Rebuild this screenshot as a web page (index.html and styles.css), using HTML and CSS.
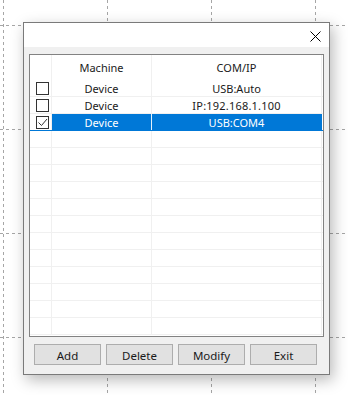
FILE: index.html
```html
<!DOCTYPE html>
<html lang="en">
<head>
    <meta charset="UTF-8">
    <meta name="viewport" content="width=device-width, initial-scale=1.0">
    <title>Device list</title>
    <link rel="stylesheet" href="styles.css">
</head>
<body>

<!-- dashed grid of the designer canvas -->
<svg class="canvas-grid" width="348" height="395" viewBox="0 0 348 395">
    <g stroke="#a6a6a6" stroke-width="1" stroke-dasharray="3 3" fill="none">
        <line x1="3.5" y1="0" x2="3.5" y2="395"/>
        <line x1="107.5" y1="0" x2="107.5" y2="395"/>
        <line x1="211.5" y1="0" x2="211.5" y2="395"/>
        <line x1="315.5" y1="0" x2="315.5" y2="395"/>
        <line x1="0" y1="25.5" x2="348" y2="25.5"/>
        <line x1="0" y1="129.5" x2="348" y2="129.5"/>
        <line x1="0" y1="233.5" x2="348" y2="233.5"/>
        <line x1="0" y1="337.5" x2="348" y2="337.5"/>
    </g>
</svg>

<div class="dialog">
    <div class="titlebar">
        <span class="close">
            <svg width="11" height="11" viewBox="0 0 11 11">
                <path d="M0.5 0.5 L10.5 10.5 M10.5 0.5 L0.5 10.5" stroke="#000" stroke-width="1" fill="none"/>
            </svg>
        </span>
    </div>

    <div class="dialog-body">
        <div class="list">
            <div class="row head">
                <div class="cell c-check"></div>
                <div class="cell c-name">Machine</div>
                <div class="cell c-port">COM/IP</div>
            </div>

            <div class="row">
                <div class="cell c-check"><span class="box"></span></div>
                <div class="cell c-name">Device</div>
                <div class="cell c-port">USB:Auto</div>
            </div>
            <div class="row">
                <div class="cell c-check"><span class="box"></span></div>
                <div class="cell c-name">Device</div>
                <div class="cell c-port ip">IP:192.168.1.100</div>
            </div>
            <div class="row selected">
                <div class="cell c-check">
                    <span class="box">
                        <svg width="11" height="11" viewBox="0 0 11 11">
                            <path d="M1.5 5.5 L4.5 8.5 L10 2" stroke="#333" stroke-width="1" fill="none"/>
                        </svg>
                    </span>
                </div>
                <div class="cell c-name">Device</div>
                <div class="cell c-port">USB:COM4</div>
            </div>

            <!-- empty rows -->
            <div class="row"><div class="cell c-check"></div><div class="cell c-name"></div><div class="cell c-port"></div></div>
            <div class="row"><div class="cell c-check"></div><div class="cell c-name"></div><div class="cell c-port"></div></div>
            <div class="row"><div class="cell c-check"></div><div class="cell c-name"></div><div class="cell c-port"></div></div>
            <div class="row"><div class="cell c-check"></div><div class="cell c-name"></div><div class="cell c-port"></div></div>
            <div class="row"><div class="cell c-check"></div><div class="cell c-name"></div><div class="cell c-port"></div></div>
            <div class="row"><div class="cell c-check"></div><div class="cell c-name"></div><div class="cell c-port"></div></div>
            <div class="row"><div class="cell c-check"></div><div class="cell c-name"></div><div class="cell c-port"></div></div>
            <div class="row"><div class="cell c-check"></div><div class="cell c-name"></div><div class="cell c-port"></div></div>
            <div class="row"><div class="cell c-check"></div><div class="cell c-name"></div><div class="cell c-port"></div></div>
            <div class="row"><div class="cell c-check"></div><div class="cell c-name"></div><div class="cell c-port"></div></div>
            <div class="row"><div class="cell c-check"></div><div class="cell c-name"></div><div class="cell c-port"></div></div>
            <div class="row"><div class="cell c-check"></div><div class="cell c-name"></div><div class="cell c-port"></div></div>
        </div>

        <div class="buttons">
            <button>Add</button>
            <button>Delete</button>
            <button>Modify</button>
            <button>Exit</button>
        </div>
    </div>
</div>

</body>
</html>
```

FILE: styles.css
```css
body {
    margin: 0;
    padding: 22px 0 0 23px;
    background: #fff;
    font-family: "Noto Sans", "Liberation Sans", sans-serif;
    font-size: 11px;
    color: #1a1a1a;
    width: 348px;
    height: 395px;
    box-sizing: border-box;
    overflow: hidden;
}
.canvas-grid {
    position: absolute;
    top: 0;
    left: 0;
    z-index: 0;
}
.dialog {
    position: relative;
    z-index: 1;
    width: 305px;
    border: 1px solid #7a7a7a;
    background: #f0f0f0;
    box-shadow: 3px 5px 14px rgba(0,0,0,0.28);
}
.titlebar {
    height: 24px;
    background: #fff;
    display: flex;
    justify-content: flex-end;
    align-items: center;
}
.close {
    display: flex;
    width: 11px;
    height: 11px;
    margin-right: 8px;
    margin-top: 2px;
}
.dialog-body {
    padding: 7px 3px 9px 5px;
}
.list {
    width: 293px;
    height: 281px;
    border: 1px solid #828282;
    background: #fff;
    overflow: hidden;
}
.row {
    display: flex;
    height: 16px;
    border-bottom: 1px solid #f0f0f0;
}
.row.head {
    height: 25px;
    border-bottom: none;
}
.cell {
    display: flex;
    align-items: center;
    justify-content: center;
    border-right: 1px solid #f0f0f0;
    white-space: nowrap;
    line-height: 16px;
    padding-top: 1px;
}
.c-check {
    width: 21px;
    padding-top: 0;
}
.c-name {
    width: 99px;
}
.c-port {
    width: 169px;
}
.ip {
    letter-spacing: 0.2px;
}
.row.selected {
    border-bottom-color: #0078d7;
}
.row.selected .c-name,
.row.selected .c-port {
    background: #0078d7;
    color: #fff;
}
.row.selected .c-name {
    border-right-color: #e5f1fb;
}
.row.selected .c-port {
    border-right-color: #0078d7;
}
.box {
    display: flex;
    align-items: center;
    justify-content: center;
    width: 11px;
    height: 11px;
    border: 1px solid #333;
    background: #fff;
    margin-left: 3px;
}
.buttons {
    display: flex;
    gap: 5px;
    margin-top: 7px;
    padding-left: 5px;
}
.buttons button {
    width: 67px;
    height: 21px;
    padding: 1px 0 0;
    font-family: "Noto Sans", "Liberation Sans", sans-serif;
    font-size: 11.5px;
    color: #1a1a1a;
    background: #e1e1e1;
    border: 1px solid #adadad;
    border-radius: 0;
}
```
